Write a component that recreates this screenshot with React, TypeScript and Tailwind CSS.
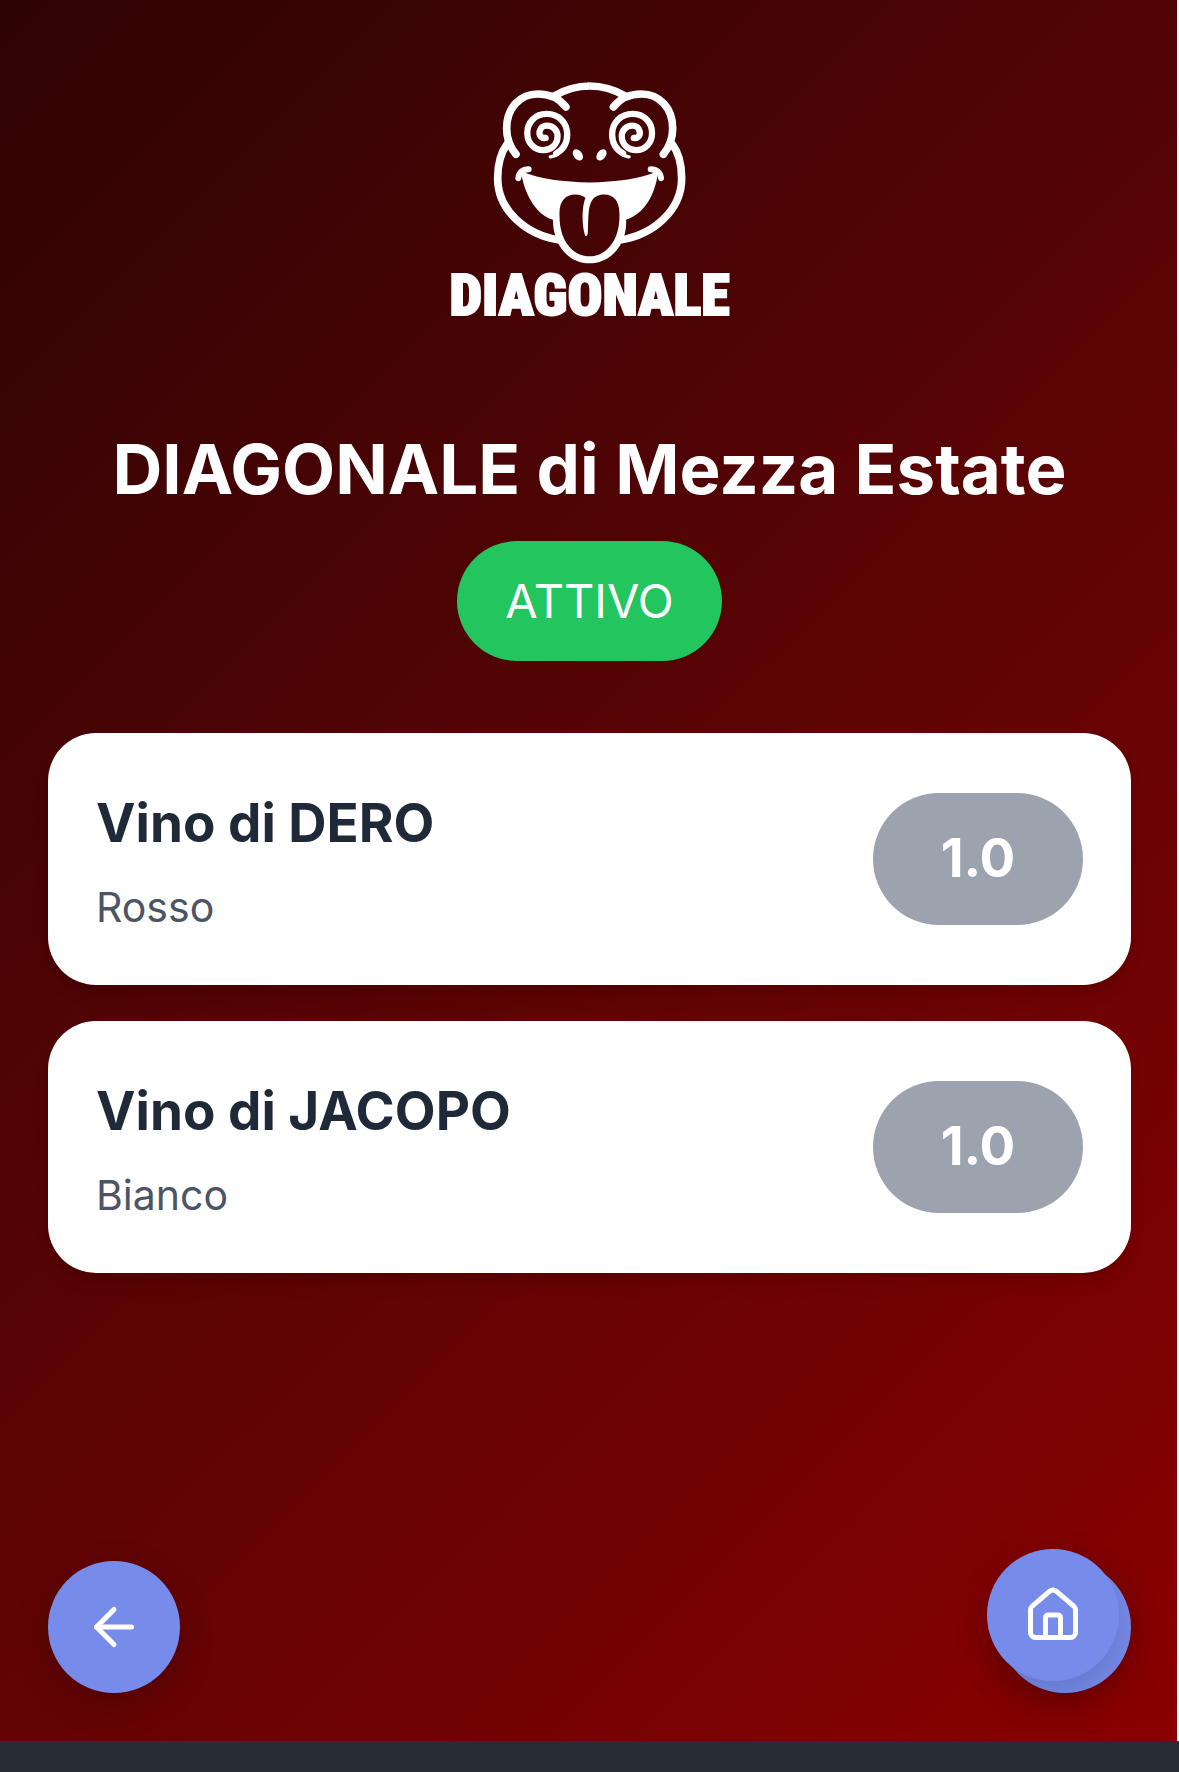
import { ArrowLeft, House } from "lucide-react";

const wines = [
  { name: "Vino di DERO", type: "Rosso", score: "1.0" },
  { name: "Vino di JACOPO", type: "Bianco", score: "1.0" },
];

function HalfFace() {
  return (
    <g fill="none" stroke="white" strokeLinecap="round">
      <path strokeWidth="23" d="M407 141C387 115 355 102 323 102C268 102 229 145 229 205C229 240 241 264 257 283" />
      <path strokeWidth="23" strokeLinecap="butt" d="M372 108Q422 78 479 78" />
      <path strokeWidth="23" strokeLinecap="butt" d="M232 250C209 280 202 318 202 355C202 450 285 525 388 541" />
      <path strokeWidth="19" d="M346 234C333 236 326 226 328 215C330 203 340 197 350 197C369 197 382 211 382 230C382 254 362 271 339 271C311 271 291 248 291 219C291 187 315 162 349 162C385 162 411 188 411 224C411 254 394 272 378 281" />
      <path strokeWidth="10" d="M388 277Q376 289 360 291" />
      <path strokeWidth="18" d="M264 355C266 338 277 328 295 328" />
      <ellipse cx="443" cy="285" rx="13" ry="19" fill="white" stroke="none" transform="rotate(-38 443 285)" />
    </g>
  );
}

function Logo() {
  return (
    <div className="flex w-72 flex-col items-center">
      <svg viewBox="186 60 584 556" className="h-[185px] w-[195px]" role="img" aria-label="Diagonale">
        <HalfFace />
        <g transform="translate(957 0) scale(-1 1)">
          <HalfFace />
        </g>
        <path
          fill="white"
          fillRule="evenodd"
          d="M276 336C330 358 400 367 478 368C556 367 626 358 680 336L682 352C670 410 642 462 588 480C592 550 545 611 478 611C410 611 368 550 368 480C318 464 288 410 275 352ZM388 470C385 425 405 404 435 404C450 404 458 408 466 414C455 440 454 498 465 528Q471 533 473 520C475 480 472 440 487 420C495 408 508 404 522 404C552 404 570 425 568 470C568 540 530 590 478 590C426 590 388 540 388 470Z"
        />
      </svg>
      <span className="font-['Roboto_Condensed','Roboto',sans-serif] text-[58px] leading-[60px] font-black text-white [-webkit-text-stroke:2px_white]">
        DIAGONALE
      </span>
    </div>
  );
}

export default function App() {
  return (
    <div className="flex min-h-screen flex-col bg-[#282c34] font-['Inter',sans-serif]">
      <main className="flex grow flex-col border-r-2 border-white bg-linear-135 from-[#2e0304] to-[#8b0000] pr-[46px] pb-12 pl-12">
        <header className="flex flex-col items-center pt-20">
          <Logo />
          <h1 className="mt-[100px] text-center text-[69px] leading-[88px] font-bold text-white">DIAGONALE di Mezza Estate</h1>
          <span className="mt-7 rounded-full bg-[#22c55e] px-12 py-6 text-[47px] leading-[72px] text-white">ATTIVO</span>
        </header>
        <ul className="mt-[72px] flex flex-col gap-9">
          {wines.map((w) => (
            <li key={w.name} className="flex items-center justify-between rounded-[48px] bg-white p-12 shadow-[0_12px_18px_-3px_rgba(0,0,0,0.1),0_6px_12px_-6px_rgba(0,0,0,0.1)]">
              <div>
                <h2 className="text-[53px] leading-[84px] font-bold text-[#1f2937]">{w.name}</h2>
                <p className="mt-3 text-[41px] leading-[60px] text-[#4b5563]">{w.type}</p>
              </div>
              <span className="flex h-[132px] w-[210px] items-center justify-center rounded-full bg-[#9ca3af] text-[53px] font-bold text-white">{w.score}</span>
            </li>
          ))}
        </ul>
        <nav className="mt-auto flex items-end justify-between">
          <button aria-label="Indietro" className="flex size-[132px] items-center justify-center rounded-full bg-[#768bea] text-white shadow-[0_12px_36px_rgba(0,0,0,0.2)]">
            <ArrowLeft size={60} />
          </button>
          <div className="relative size-[132px] rounded-full bg-[#768bea] shadow-[0_12px_36px_rgba(0,0,0,0.2)]">
            <button aria-label="Home" className="absolute right-3 bottom-3 flex size-[132px] items-center justify-center rounded-full bg-[#768bea] text-white shadow-[0_12px_36px_rgba(0,0,0,0.15)]">
              <House size={60} />
            </button>
          </div>
        </nav>
      </main>
      <footer className="h-[31px]" />
    </div>
  );
}
